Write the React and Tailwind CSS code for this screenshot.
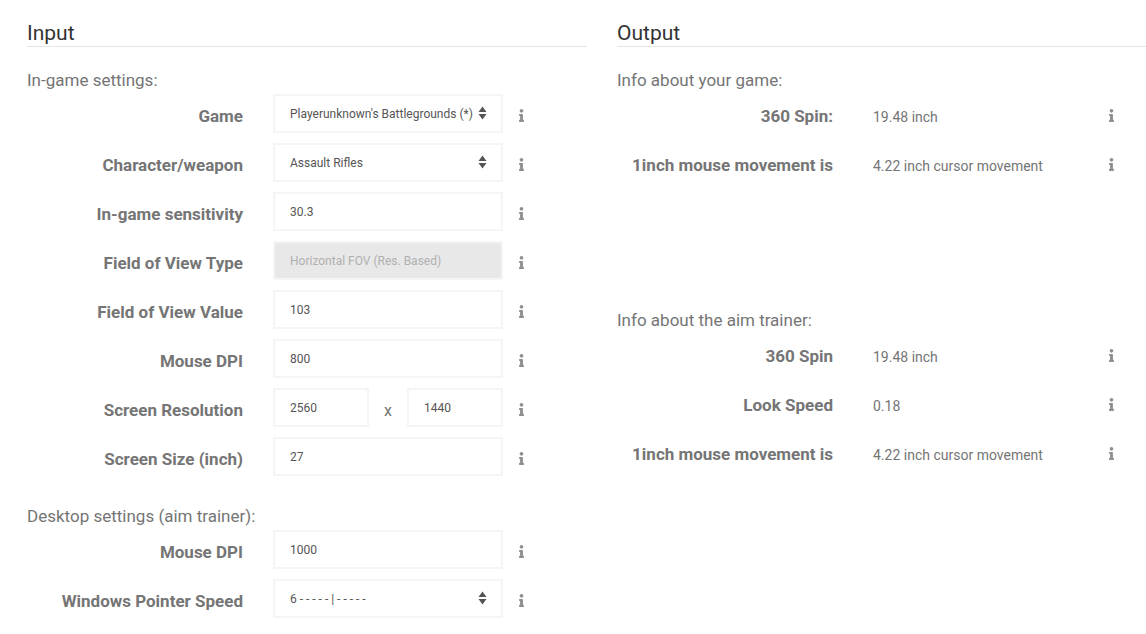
import { FaInfo } from "react-icons/fa";

const boxClass = "h-[39px] border-2 border-[#f5f5f5] px-[15px] text-[12px] text-[#555] outline-none";

const InfoIcon = () => (
  <span className="relative top-[2px] flex w-[7px] justify-center text-[#8f8f8f]">
    <FaInfo size={13} />
  </span>
);

const SelectBox = ({ value }) => (
  <div className={`${boxClass} flex w-[230px] items-center justify-between bg-white pr-[14px]`}>
    <span className="whitespace-nowrap">{value}</span>
    <svg width="9" height="14" viewBox="0 0 9 14" className="relative top-[-1px] shrink-0">
      <path d="M4.5 0.5 L8.5 6 H0.5 Z M0.5 8 H8.5 L4.5 13.5 Z" fill="#555" />
    </svg>
  </div>
);

const TextBox = ({ value, width = "w-[230px]" }) => (
  <input readOnly value={value} className={`${boxClass} ${width} bg-white`} />
);

const RowLabel = ({ children }) => (
  <div className="w-[216px] pt-[7px] text-right text-[17px] font-bold text-[#757575]">{children}</div>
);

const InputRow = ({ label, children }) => (
  <div className="flex h-[39px] items-center">
    <RowLabel>{label}</RowLabel>
    <div className="ml-[30px] flex w-[230px] items-center">{children}</div>
    <div className="ml-[15px]">
      <InfoIcon />
    </div>
  </div>
);

const OutputRow = ({ label, value }) => (
  <div className="flex h-[39px] items-center">
    <RowLabel>{label}</RowLabel>
    <div className="ml-[40px] w-[235px] pt-[7px] text-[14px] text-[#757575]">{value}</div>
    <InfoIcon />
  </div>
);

const SubHeading = ({ children, className }) => (
  <div className={`text-[17px] leading-[20px] text-[#757575] ${className}`}>{children}</div>
);

const Heading = ({ children }) => (
  <h2 className="h-[27px] border-b border-[#e5e5e5] text-[21px] leading-[26px] text-[#333]">{children}</h2>
);

export default function App() {
  return (
    <div className="flex h-[634px] w-[1146px] gap-[30px] overflow-hidden bg-white pl-[27px] pt-[20px] font-['Roboto',sans-serif]">
      <section className="w-[560px] shrink-0">
        <Heading>Input</Heading>
        <SubHeading className="mt-[23px]">In-game settings:</SubHeading>
        <div className="mt-[4px] flex flex-col gap-[10px]">
          <InputRow label="Game">
            <SelectBox value="Playerunknown's Battlegrounds (*)" />
          </InputRow>
          <InputRow label="Character/weapon">
            <SelectBox value="Assault Rifles" />
          </InputRow>
          <InputRow label="In-game sensitivity">
            <TextBox value="30.3" />
          </InputRow>
          <InputRow label="Field of View Type">
            <input
              readOnly
              value="Horizontal FOV (Res. Based)"
              className={`${boxClass} w-[230px] bg-[#e8e8e8] text-[#b0b0b0]`}
            />
          </InputRow>
          <InputRow label="Field of View Value">
            <TextBox value="103" />
          </InputRow>
          <InputRow label="Mouse DPI">
            <TextBox value="800" />
          </InputRow>
          <InputRow label="Screen Resolution">
            <TextBox value="2560" width="w-[96px]" />
            <span className="flex-1 pt-[7px] text-center text-[16px] text-[#757575]">x</span>
            <TextBox value="1440" width="w-[96px]" />
          </InputRow>
          <InputRow label="Screen Size (inch)">
            <TextBox value="27" />
          </InputRow>
        </div>
        <SubHeading className="mt-[30px]">Desktop settings (aim trainer):</SubHeading>
        <div className="mt-[4px] flex flex-col gap-[10px]">
          <InputRow label="Mouse DPI">
            <TextBox value="1000" />
          </InputRow>
          <InputRow label="Windows Pointer Speed">
            <SelectBox value="6 - - - - - | - - - - -" />
          </InputRow>
        </div>
      </section>
      <section className="min-w-0 flex-1">
        <Heading>Output</Heading>
        <SubHeading className="mt-[23px]">Info about your game:</SubHeading>
        <div className="mt-[4px] flex flex-col gap-[10px]">
          <OutputRow label="360 Spin:" value="19.48 inch" />
          <OutputRow label="1inch mouse movement is" value="4.22 inch cursor movement" />
        </div>
        <SubHeading className="mt-[128px]">Info about the aim trainer:</SubHeading>
        <div className="mt-[4px] flex flex-col gap-[10px]">
          <OutputRow label="360 Spin" value="19.48 inch" />
          <OutputRow label="Look Speed" value="0.18" />
          <OutputRow label="1inch mouse movement is" value="4.22 inch cursor movement" />
        </div>
      </section>
    </div>
  );
}
